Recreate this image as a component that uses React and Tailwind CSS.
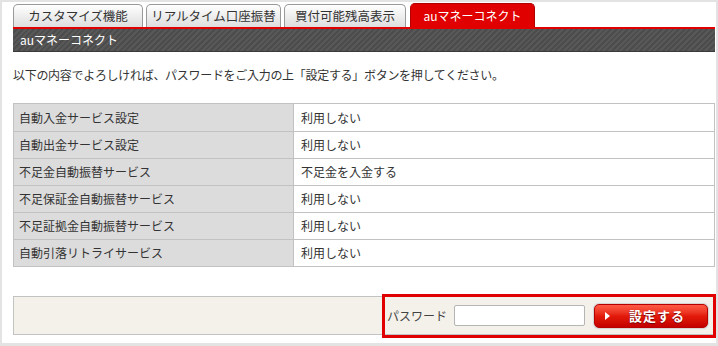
import React from 'react';

const rows = [
    ['自動入金サービス設定', '利用しない'],
    ['自動出金サービス設定', '利用しない'],
    ['不足金自動振替サービス', '不足金を入金する'],
    ['不足保証金自動振替サービス', '利用しない'],
    ['不足証拠金自動振替サービス', '利用しない'],
    ['自動引落リトライサービス', '利用しない'],
];

const tabs = [
    { label: 'カスタマイズ機能', w: 'w-[130px]' },
    { label: 'リアルタイム口座振替', w: 'w-[135px]' },
    { label: '買付可能残高表示', w: 'w-[122px]' },
];

const App = () => {
    return (
        <div className="w-[718px] h-[346px] bg-[#e3e3e3] pt-[2px] pl-[2px] pr-[2px] pb-[3px] font-['Noto_Sans_CJK_JP','Noto_Sans',sans-serif] text-[#333]">
            <div className="bg-white h-full pl-[11px] pr-[1px]">
                {/* tabs */}
                <div className="flex items-end gap-[3px] pt-[1px] h-[25px]">
                    {tabs.map(t => (
                        <div key={t.label} className={`${t.w} h-[23px] border border-b-0 border-[#999] rounded-t-[5px] bg-gradient-to-b from-white to-[#dedede] flex items-center justify-center text-[12.5px] leading-none text-[#333]`}>{t.label}</div>
                    ))}
                    <div className="ml-[1px] w-[125px] h-[24px] rounded-t-[5px] border border-b-0 border-[#b00000] bg-[#e00000] flex items-center justify-center text-[12px] leading-none text-white">auマネーコネクト</div>
                </div>
                <div className="h-[2px] bg-[#e00000]" />
                <div className="h-[23px] flex items-center pl-[7px] text-[12px] text-white border-b border-[#3a3a3a] bg-[repeating-linear-gradient(135deg,#585858_0px,#585858_2px,#4c4c4c_2px,#4c4c4c_4px)]">auマネーコネクト</div>

                <p className="mt-[15px] text-[12px] leading-[16px] tracking-[-0.3px]">以下の内容でよろしければ、パスワードをご入力の上「設定する」ボタンを押してください。</p>

                {/* settings table */}
                <div className="mt-[20px] border border-[#c2c2c2] text-[12px]">
                    {rows.map(([k, v], i) => (
                        <div key={k} className={`flex h-[27px] ${i > 0 ? 'border-t border-[#c2c2c2]' : ''}`}>
                            <div className="w-[280px] bg-[#dcdcdc] border-r border-[#c2c2c2] flex items-center pl-[5px]">{k}</div>
                            <div className="flex-1 bg-white flex items-center pl-[7px]">{v}</div>
                        </div>
                    ))}
                </div>

                {/* password box */}
                <div className="relative mt-[29px] h-[39px] border border-[#c2c2c2] bg-[#f4f1eb] flex items-center justify-end pr-[5px]">
                    <span className="text-[12px] text-[#444] mr-[7px]">パスワード</span>
                    <input type="password" className="w-[131px] h-[21px] bg-white border border-[#b5b5b5] rounded-[2px] mr-[8px]" />
                    <button className="w-[116px] h-[26px] rounded-[6px] p-[1px] bg-[#d8d4d0] shadow-[0_0_0_1px_#eee]">
                        <span className="relative h-full rounded-[5px] border border-[#b80000] bg-gradient-to-b from-[#ff5a45] via-[#e31a0a] to-[#c40000] flex items-center justify-center text-white text-[13px] font-bold tracking-[1px] [text-shadow:0_1px_1px_#700]">
                            <span className="absolute left-[10px] top-1/2 -translate-y-1/2 w-0 h-0 border-y-[4px] border-y-transparent border-l-[5px] border-l-white" />
                            <span className="ml-[12px]">設定する</span>
                        </span>
                    </button>
                    <div className="absolute left-[368px] -top-[3px] -right-[2px] -bottom-[4px] border-[3px] border-[#e00000] pointer-events-none" />
                </div>
            </div>
        </div>
    );
};

export default App;
